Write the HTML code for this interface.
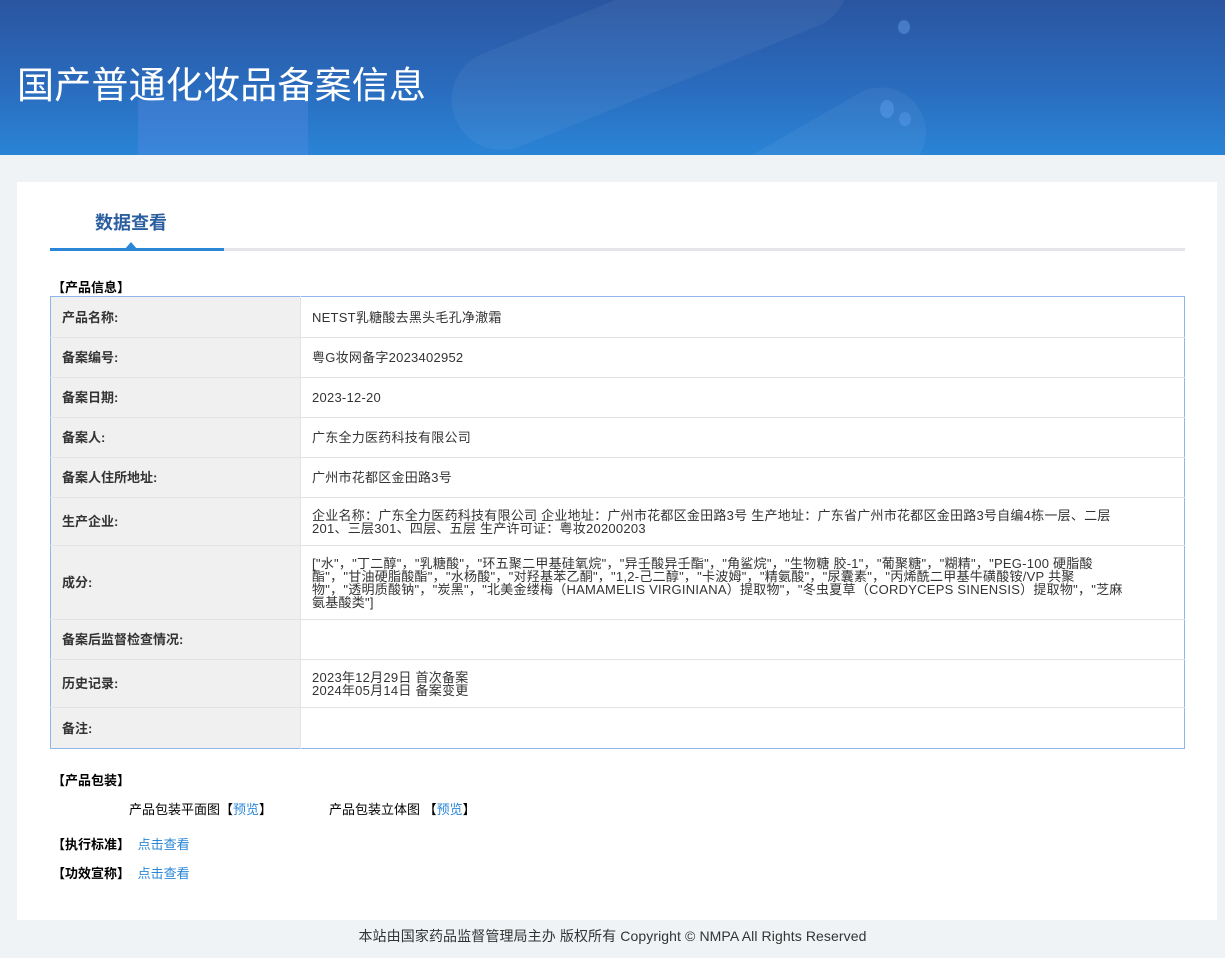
<!DOCTYPE html>
<html><head><meta charset="utf-8"><style>
*{margin:0;padding:0;box-sizing:border-box}
body{width:1225px;height:958px;background:#eff3f6;font-family:"Liberation Sans","Noto Sans CJK SC",sans-serif;color:#333;position:relative;overflow:hidden;font-size:13px}
.hdr{position:absolute;left:0;top:0;width:1225px;height:155px;background:linear-gradient(180deg,#2a55a0 0%,#2a6bbd 55%,#2a84d6 100%);overflow:hidden}
.hdr h1{position:absolute;left:17px;top:58px;font-size:37px;font-weight:normal;color:#fff;letter-spacing:0.2px;font-family:"Noto Sans CJK SC",sans-serif;line-height:48px}
.card{position:absolute;left:17px;top:182px;width:1200px;height:738px;background:#fff}
.tab{position:absolute;left:95px;top:209px;font-size:18px;font-weight:bold;color:#2b5fa0}
.line{position:absolute;left:50px;top:248px;width:1135px;height:3px;background:#e4e6e9}
.line2{position:absolute;left:50px;top:248px;width:174px;height:3px;background:#2a87d8}
.tri{position:absolute;left:125px;top:242px;width:0;height:0;border-left:6px solid transparent;border-right:6px solid transparent;border-bottom:7px solid #2a87d8}
.sec{position:absolute;left:52px;font-weight:bold;color:#000;font-size:13px}
table{position:absolute;left:50px;top:296px;width:1135px;border-collapse:collapse;border:1px solid #8fb6ec}
td{border-bottom:1px solid #e3e3e3;font-size:13px;line-height:13px;vertical-align:middle}
td.l{width:250px;background:#f0f0f0;font-weight:bold;color:#333;padding-left:11px;border-right:1px solid #e3e3e3}
td.v{padding-left:11px;color:#333;letter-spacing:0.25px}
a{color:#2a87d8;text-decoration:none}
.foot{position:absolute;top:926px;left:0;width:1225px;text-align:center;font-size:14px;color:#333;letter-spacing:0.1px}
</style></head><body>
<div class="hdr">
<div style="position:absolute;left:440px;top:-10px;width:420px;height:100px;border-radius:50px;background:rgba(255,255,255,0.05);transform:rotate(-22deg)"></div>
<div style="position:absolute;left:138px;top:100px;width:170px;height:80px;background:rgba(90,140,230,0.35)"></div>
<div style="position:absolute;left:640px;top:140px;width:300px;height:90px;border-radius:45px;background:rgba(255,255,255,0.05);transform:rotate(-30deg)"></div>
<div style="position:absolute;left:898px;top:20px;width:12px;height:14px;border-radius:50%;background:rgba(120,180,255,0.35)"></div>
<div style="position:absolute;left:880px;top:100px;width:14px;height:18px;border-radius:50%;background:rgba(120,180,255,0.3)"></div>
<div style="position:absolute;left:899px;top:112px;width:12px;height:14px;border-radius:50%;background:rgba(120,180,255,0.25)"></div>
<h1>国产普通化妆品备案信息</h1>
</div>
<div class="card"></div>
<div class="tab">数据查看</div>
<div class="line"></div><div class="line2"></div><div class="tri"></div>
<div class="sec" style="top:277px">【产品信息】</div>
<table>
<tr style="height:41px"><td class="l">产品名称:</td><td class="v">NETST乳糖酸去黑头毛孔净澈霜</td></tr>
<tr style="height:40px"><td class="l">备案编号:</td><td class="v">粤G妆网备字2023402952</td></tr>
<tr style="height:40px"><td class="l">备案日期:</td><td class="v">2023-12-20</td></tr>
<tr style="height:40px"><td class="l">备案人:</td><td class="v">广东全力医药科技有限公司</td></tr>
<tr style="height:40px"><td class="l">备案人住所地址:</td><td class="v">广州市花都区金田路3号</td></tr>
<tr style="height:48px"><td class="l">生产企业:</td><td class="v" style="white-space:nowrap">企业名称：广东全力医药科技有限公司 企业地址：广州市花都区金田路3号 生产地址：广东省广州市花都区金田路3号自编4栋一层、二层<br>201、三层301、四层、五层 生产许可证：粤妆20200203</td></tr>
<tr style="height:74px"><td class="l">成分:</td><td class="v" style="white-space:nowrap">["水"，"丁二醇"，"乳糖酸"，"环五聚二甲基硅氧烷"，"异壬酸异壬酯"，"角鲨烷"，"生物糖 胶-1"，"葡聚糖"，"糊精"，"PEG-100 硬脂酸<br>酯"，"甘油硬脂酸酯"，"水杨酸"，"对羟基苯乙酮"，"1,2-己二醇"，"卡波姆"，"精氨酸"，"尿囊素"，"丙烯酰二甲基牛磺酸铵/VP 共聚<br>物"，"透明质酸钠"，"炭黑"，"北美金缕梅（HAMAMELIS VIRGINIANA）提取物"，"冬虫夏草（CORDYCEPS SINENSIS）提取物"，"芝麻<br>氨基酸类"]</td></tr>
<tr style="height:40px"><td class="l">备案后监督检查情况:</td><td class="v"></td></tr>
<tr style="height:48px"><td class="l">历史记录:</td><td class="v">2023年12月29日 首次备案<br>2024年05月14日 备案变更</td></tr>
<tr style="height:41px"><td class="l" style="border-bottom:none">备注:</td><td class="v" style="border-bottom:none"></td></tr>
</table>
<div class="sec" style="top:770px">【产品包装】</div>
<div style="position:absolute;left:129px;top:799px;color:#000">产品包装平面图【<a>预览</a>】</div>
<div style="position:absolute;left:329px;top:799px;color:#000">产品包装立体图 【<a>预览</a>】</div>
<div class="sec" style="top:834px">【执行标准】 <a style="font-weight:normal;margin-left:4px">点击查看</a></div>
<div class="sec" style="top:863px">【功效宣称】 <a style="font-weight:normal;margin-left:4px">点击查看</a></div>
<div class="foot">本站由国家药品监督管理局主办 版权所有 Copyright © NMPA All Rights Reserved</div>
</body></html>
